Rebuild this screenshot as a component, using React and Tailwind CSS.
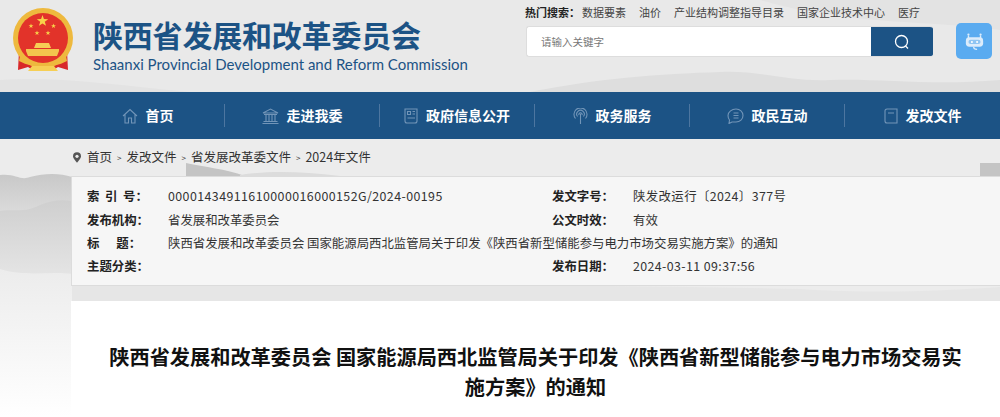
import React from 'react'

const cjk = { fontFamily: '"Noto Sans CJK SC", "Liberation Sans", sans-serif' }

const Star = ({ x, y, r, fill = '#f8d24a' }) => {
    const pts = []
    for (let i = 0; i < 10; i++) {
        const a = -Math.PI / 2 + (i * Math.PI) / 5
        const rr = i % 2 === 0 ? r : r * 0.4
        pts.push(`${x + rr * Math.cos(a)},${y + rr * Math.sin(a)}`)
    }
    return <polygon points={pts.join(' ')} fill={fill} />
}

// National emblem, simplified
const Emblem = () => (
    <svg width="62" height="66" viewBox="0 0 62 66" className="shrink-0">
        <path d="M7 44 L6 63 L16 60 L22 64 L40 64 L46 60 L56 63 L55 44 Z" fill="#d8282a" />
        <circle cx="31" cy="31" r="30" fill="#eeb93e" />
        <circle cx="31" cy="31" r="25" fill="#e2332a" />
        <Star x={30.5} y={14} r={6} />
        <Star x={19} y={19} r={2.6} />
        <Star x={41.5} y={19} r={2.6} />
        <Star x={25} y={26} r={2.6} />
        <Star x={36} y={26} r={2.6} />
        <path d="M24 36h13l2 5H22z" fill="#f6cf55" />
        <path d="M14 42h33v2l-2 5H16l-2-5z" fill="#f3c44d" />
        <path d="M8 49c8 7 16 9 23 9s15-2 23-9l1 5c-8 4-16 6-24 6s-16-2-24-6z" fill="#eeb93e" />
        <path d="M20 59h22l4 5H16z" fill="#f6cf55" />
    </svg>
)

const RobotIcon = () => (
    <svg width="19" height="19" viewBox="0 0 22 22" fill="none">
        <path d="M4 4v3M18 4v3" stroke="#dcecfb" strokeWidth="1.6" />
        <circle cx="4" cy="3" r="1.3" fill="#dcecfb" />
        <circle cx="18" cy="3" r="1.3" fill="#dcecfb" />
        <rect x="1" y="6" width="20" height="11" rx="4" fill="#dcecfb" />
        <rect x="4" y="9" width="14" height="5" rx="2.5" fill="#8fc5f3" />
        <circle cx="8" cy="11.5" r="1.2" fill="#fff" />
        <circle cx="14" cy="11.5" r="1.2" fill="#fff" />
        <path d="M10 17c0 2 1 3 4 3" stroke="#dcecfb" strokeWidth="1.5" />
    </svg>
)

const stroke = { fill: 'none', stroke: '#7295b8', strokeWidth: 1.1 }

const NavIcon = ({ name }) => {
    if (name === 'home') return (
        <svg width="16" height="16" viewBox="0 0 16 16" {...stroke} className="ml-[1px]">
            <path d="M1 8 L8 1.5 L15 8 M3 6.5V15h3.5v-5h3v5H13V6.5" />
        </svg>
    )
    if (name === 'bank') return (
        <svg width="17" height="16" viewBox="0 0 17 16" {...stroke}>
            <path d="M1 5 L8.5 1 L16 5Z M2 6.5h13 M4 7v6 M7 7v6 M10 7v6 M13 7v6 M1.5 13.5h14 M0.5 15.5h16" />
        </svg>
    )
    if (name === 'news') return (
        <svg width="14" height="16" viewBox="0 0 14 16" {...stroke}>
            <path d="M1 1h12v12a2 2 0 0 1-2 2H3a2 2 0 0 1-2-2z M3.5 3.5h3v3h-3z M8.5 3.5H11 M8.5 6H11 M3.5 10H11" />
        </svg>
    )
    if (name === 'signal') return (
        <svg width="15" height="16" viewBox="0 0 15 16" {...stroke}>
            <path d="M7.5 6v10 M2.5 10.5a6.5 6.5 0 1 1 10 0 M4.5 8.5a3.8 3.8 0 1 1 6 0 M6 7a1.6 1.6 0 1 1 3 0" />
        </svg>
    )
    if (name === 'chat') return (
        <svg width="17" height="16" viewBox="0 0 17 16" {...stroke}>
            <path d="M9 1c4 0 7 2.8 7 6.5S13 14 9 14H5l-3 1.5 .5-3.5C1.5 10.800 1 9.200 1 7.5 1 3.800 5 1 9 1z M6.5 5h5 M6.5 7.5h5 M6.5 10h5" />
        </svg>
    )
    return (
        <svg width="14" height="16" viewBox="0 0 14 16" {...stroke}>
            <path d="M1 3a2 2 0 0 1 2-2h10v14H3a2 2 0 0 1-2-2z M4 5h6" />
        </svg>
    )
}

const navItems = [
    { icon: 'home', label: '首页' },
    { icon: 'bank', label: '走进我委' },
    { icon: 'news', label: '政府信息公开' },
    { icon: 'signal', label: '政务服务' },
    { icon: 'chat', label: '政民互动' },
    { icon: 'book', label: '发改文件' },
]

const hotWords = ['数据要素', '油价', '产业结构调整指导目录', '国家企业技术中心', '医疗']

const InfoRow = ({ label, value, wide, right, rightWide }) => (
    <div className="flex h-[23.3px] items-center">
        <div className="flex w-[465px] shrink-0">
            <span className="w-[81px] shrink-0 whitespace-pre font-bold text-[#222]">{label}</span>
            <span className={`whitespace-nowrap text-[#333] ${wide ? 'tracking-[0.43px]' : ''}`}>{value}</span>
        </div>
        {right && (
            <div className="flex">
                <span className="w-[81px] shrink-0 font-bold text-[#222]">{right[0]}</span>
                <span className={`whitespace-nowrap text-[#333] ${rightWide ? 'tracking-[0.4px]' : ''}`}>{right[1]}</span>
            </div>
        )}
    </div>
)

export default function App() {
    return (
        <div className="relative h-[417px] w-[1000px] overflow-hidden bg-[#ebebeb]" style={cjk}>
            {/* header */}
            <header className="relative flex h-[92px] bg-[#e9e9e9]">
                <svg className="absolute inset-0" width="1000" height="92" viewBox="0 0 1000 92">
                    <path d="M530 92 C600 78 660 74 720 72 C760 70 790 82 830 80 C880 78 930 86 1000 80 V92Z" fill="#dedede" />
                    <path d="M0 80 C60 76 120 86 190 92 H0Z" fill="#e3e3e3" />
                    <path d="M760 0 H1000 V30 C930 20 850 26 760 0Z" fill="#e3e3e3" />
                </svg>
                <div className="relative ml-[12px] mt-[7px]"><Emblem /></div>
                <div className="relative ml-[19px] mt-[16px] text-[#1c5385]">
                    <div className="text-[30px] font-bold leading-[36px] tracking-[-0.2px]">陕西省发展和改革委员会</div>
                    <div className="mt-[3px] whitespace-nowrap text-[15px] leading-[18px]" style={{ fontFamily: 'Lato, sans-serif' }}>Shaanxi Provincial Development and Reform Commission</div>
                </div>
                <div className="relative ml-auto mr-[8px] mt-[6px] flex gap-[23px]">
                    <div className="w-[408px]">
                        <div className="flex h-[13px] items-center whitespace-nowrap text-[11px] text-[#444]">
                            <span className="mr-[2px] font-bold text-[#222]">热门搜索：</span>
                            <div className="flex gap-[13px]">
                                {hotWords.map((w) => <span key={w}>{w}</span>)}
                            </div>
                        </div>
                        <div className="ml-[1px] mt-[7px] flex h-[31px] overflow-hidden rounded-[3px] border border-r-0 border-[#ddd] bg-white">
                            <div className="flex flex-1 items-center pl-[14px] text-[10.5px] text-[#777]">请输入关键字</div>
                            <button className="flex w-[62px] items-center justify-center bg-[#1c5385]">
                                <svg width="16" height="16" viewBox="0 0 16 16" fill="none" stroke="#fff" strokeWidth="1.3">
                                    <circle cx="7.5" cy="7.5" r="6" />
                                    <path d="M11.5 12 L14 14.5" />
                                </svg>
                            </button>
                        </div>
                    </div>
                    <div className="mt-[17px] flex h-[36px] w-[36px] items-center justify-center rounded-[5px] bg-[#5aabf0]">
                        <RobotIcon />
                    </div>
                </div>
            </header>

            {/* nav */}
            <nav className="relative grid h-[47px] grid-cols-[repeat(6,155px)] bg-[#1c5385] pl-[70px]">
                {navItems.map((item, i) => (
                    <div key={item.label} className="flex items-center justify-center">
                        <div className={`flex h-[23px] w-full items-center justify-center gap-[8px] ${i < 5 ? 'border-r border-[#4d76a0]' : ''}`}>
                            <NavIcon name={item.icon} />
                            <span className="text-[14px] font-bold text-white">{item.label}</span>
                        </div>
                    </div>
                ))}
            </nav>

            {/* body */}
            <main className="relative h-[278px] bg-[#ececec]">
                <svg className="absolute inset-0" width="1000" height="278" viewBox="0 0 1000 278">
                    <defs>
                        <linearGradient id="ink1" x1="0" y1="0" x2="0" y2="1">
                            <stop offset="0" stopColor="#c8c8c8" />
                            <stop offset="1" stopColor="#e8e8e8" />
                        </linearGradient>
                        <linearGradient id="ink2" x1="0" y1="0" x2="0" y2="1">
                            <stop offset="0" stopColor="#cfcfcf" />
                            <stop offset="1" stopColor="#e4e4e4" />
                        </linearGradient>
                        <linearGradient id="fade" x1="0" y1="0" x2="0" y2="1">
                            <stop offset="0" stopColor="#ececec" />
                            <stop offset="1" stopColor="#ffffff" />
                        </linearGradient>
                    </defs>
                    <rect x="0" y="130" width="72" height="148" fill="url(#fade)" />
                    <path d="M0 36 C15 34 20 42 30 38 C45 34 60 34 72 38 V100 H0Z" fill="url(#ink1)" />
                    <path d="M0 72 C15 70 25 74 40 66 C50 62 60 60 72 62 V135 C50 132 25 138 0 130Z" fill="url(#ink2)" />
                    <path d="M186 24 C205 28 225 30 245 37 H186Z" fill="#c4c4c4" />
                    <path d="M240 36 C265 32 300 32 340 37 H240Z" fill="#dcdcdc" />
                    <path d="M980 24 H1000 V37 H980Z" fill="#c4c4c4" />
                    <path d="M72 147 C300 146 600 145 800 150 C880 155 940 152 1000 148 V162 H72Z" fill="#e6e6e6" />
                </svg>
                <div className="relative flex h-[37px] items-center pl-[73px] text-[12.5px] text-[#333]">
                    <svg width="8" height="11" viewBox="0 0 10 13" className="mr-[6px]">
                        <path d="M5 0a5 5 0 0 1 5 5c0 3-5 8-5 8S0 8 0 5a5 5 0 0 1 5-5z" fill="#555" />
                        <circle cx="5" cy="5" r="2" fill="#ececec" />
                    </svg>
                    <span>首页</span>
                    <span className="mx-[5px] text-[8px]">&gt;</span>
                    <span>发改文件</span>
                    <span className="mx-[5px] text-[8px]">&gt;</span>
                    <span>省发展改革委文件</span>
                    <span className="mx-[5px] text-[8px]">&gt;</span>
                    <span>2024年文件</span>
                </div>
                <section className="relative ml-[71px] h-[110px] border border-r-0 border-[#dcdcdc] bg-[#f6f6f6] pl-[15px] pt-[8px] text-[12.4px]">
                    <InfoRow label="索  引  号：" value="00001434911610000016000152G/2024-00195" wide right={['发文字号：', '陕发改运行〔2024〕377号']} rightWide />
                    <InfoRow label="发布机构：" value="省发展和改革委员会" right={['公文时效：', '有效']} />
                    <InfoRow label="标      题：" value="陕西省发展和改革委员会 国家能源局西北监管局关于印发《陕西省新型储能参与电力市场交易实施方案》的通知" />
                    <InfoRow label="主题分类：" value="" right={['发布日期：', '2024-03-11 09:37:56']} rightWide />
                </section>
                <article className="relative ml-[71px] mt-[15px] h-[200px] bg-white px-[35px] pt-[41px]">
                    <h1 className="text-center text-[20.2px] font-bold leading-[30px] text-[#111]">
                        陕西省发展和改革委员会 国家能源局西北监管局关于印发《陕西省新型储能参与电力市场交易实施方案》的通知
                    </h1>
                </article>
            </main>
        </div>
    )
}
